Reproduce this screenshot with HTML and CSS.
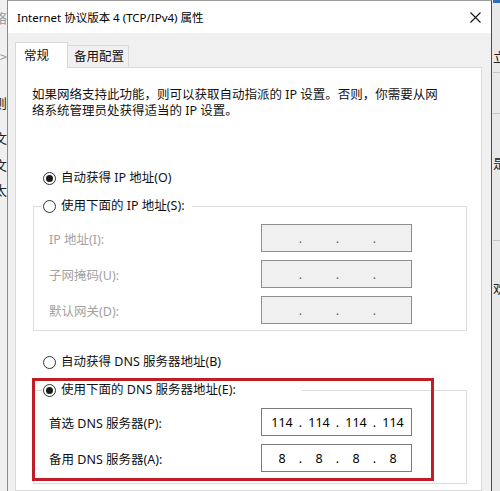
FILE: index.html
```html
<!DOCTYPE html>
<html lang="zh-CN">
<head>
    <meta charset="UTF-8">
    <meta name="viewport" content="width=device-width, initial-scale=1.0">
    <link rel="stylesheet" href="styles.css">
    <title>Internet 协议版本 4 (TCP/IPv4) 属性</title>
</head>
<body>
<div class="screen">
    <div class="side side-left">
        <span class="frag muted">络</span>
        <span class="frag muted">&gt;</span>
        <span class="frag">则</span>
        <span class="frag">文</span>
        <span class="frag">文</span>
        <span class="frag">太</span>
    </div>

    <div class="dialog">
        <div class="titlebar">
            <span class="title">Internet 协议版本 4 (TCP/IPv4) 属性</span>
            <span class="close">
                <svg width="11" height="11" viewBox="0 0 11 11">
                    <path d="M0.5 0.5 L10.5 10.5 M10.5 0.5 L0.5 10.5" stroke="#111" stroke-width="1.1" fill="none"/>
                </svg>
            </span>
        </div>

        <div class="dialog-body">
            <div class="tabs">
                <div class="tab active">常规</div>
                <div class="tab">备用配置</div>
            </div>

            <div class="panel">
                <p class="intro">如果网络支持此功能，则可以获取自动指派的 IP 设置。否则，你需要从网<br>络系统管理员处获得适当的 IP 设置。</p>

                <div class="option first"><span class="radio checked"></span>自动获得 IP 地址(O)</div>

                <fieldset class="group ip-group">
                    <legend class="option"><span class="radio"></span>使用下面的 IP 地址(S):</legend>
                    <div class="fields">
                        <span class="label disabled">IP 地址(I):</span>
                        <div class="ip-field disabled"><span class="seg"></span><span class="dot">.</span><span class="seg"></span><span class="dot">.</span><span class="seg"></span><span class="dot">.</span><span class="seg"></span></div>
                        <span class="label disabled">子网掩码(U):</span>
                        <div class="ip-field disabled"><span class="seg"></span><span class="dot">.</span><span class="seg"></span><span class="dot">.</span><span class="seg"></span><span class="dot">.</span><span class="seg"></span></div>
                        <span class="label disabled">默认网关(D):</span>
                        <div class="ip-field disabled"><span class="seg"></span><span class="dot">.</span><span class="seg"></span><span class="dot">.</span><span class="seg"></span><span class="dot">.</span><span class="seg"></span></div>
                    </div>
                </fieldset>

                <div class="option dns-auto"><span class="radio"></span>自动获得 DNS 服务器地址(B)</div>

                <fieldset class="group dns-group">
                    <legend class="option"><span class="radio checked"></span>使用下面的 DNS 服务器地址(E):</legend>
                    <div class="fields">
                        <span class="label">首选 DNS 服务器(P):</span>
                        <div class="ip-field"><span class="seg">114</span><span class="dot">.</span><span class="seg">114</span><span class="dot">.</span><span class="seg">114</span><span class="dot">.</span><span class="seg">114</span></div>
                        <span class="label">备用 DNS 服务器(A):</span>
                        <div class="ip-field"><span class="seg">8</span><span class="dot">.</span><span class="seg">8</span><span class="dot">.</span><span class="seg">8</span><span class="dot">.</span><span class="seg">8</span></div>
                    </div>
                </fieldset>

                <!-- annotation drawn over the screenshot -->
                <div class="highlight"></div>
            </div>
        </div>
    </div>

    <div class="side side-right">
        <span class="edge-blue"></span>
        <span class="frag frag-1">立</span>
        <span class="rule rule-1"></span>
        <span class="rule rule-2"></span>
        <span class="frag frag-2">是:</span>
        <span class="rule rule-3"></span>
        <span class="frag frag-3">欢</span>
    </div>
</div>
</body>
</html>
```

FILE: styles.css
```css
body {
    margin: 0;
    font-family: "Noto Sans", "Noto Sans CJK SC", sans-serif;
    font-size: 12.5px;
    color: #111;
    background-color: #f0f0f0;
}

.screen {
    display: flex;
    width: 500px;
    height: 491px;
    overflow: hidden;
}

/* bits of the windows behind the dialog */
.side {
    width: 7px;
    flex-shrink: 0;
    display: flex;
    flex-direction: column;
    overflow: hidden;
    line-height: 16px;
    white-space: nowrap;
}

.side-left {
    align-items: flex-end;
    background-color: #f0f0f0;
}

.side-left .frag:nth-child(1) { margin-top: 10px; }
.side-left .frag:nth-child(2) { margin-top: 23px; }
.side-left .frag:nth-child(3) { margin-top: 30px; }
.side-left .frag:nth-child(4) { margin-top: 19px; }
.side-left .frag:nth-child(5) { margin-top: 11px; }
.side-left .frag:nth-child(6) { margin-top: 9px; }

.side-right {
    align-items: flex-start;
    background-color: #e9e9e9;
    padding-left: 1px;
}

.frag {
    font-family: "Noto Sans CJK SC", sans-serif;
    font-size: 13px;
    color: #222;
}

.frag.muted {
    color: #9a9a9a;
}

.edge-blue {
    display: block;
    width: 100%;
    height: 3px;
    background-color: #2c6fb8;
}

.rule {
    display: block;
    width: 100%;
    height: 1px;
    background-color: #c6c6c6;
}

.frag-1 { margin-top: 46px; }
.rule-1 { margin-top: 7px; }
.rule-2 { margin-top: 40px; }
.frag-2 { margin-top: 41px; }
.rule-3 { margin-top: 69px; }
.frag-3 { margin-top: 39px; }

/* dialog */
.dialog {
    flex: 1;
    display: flex;
    flex-direction: column;
    border-top: 1px solid #9c9c9c;
    border-left: 1px solid #8a8a8a;
    border-right: 1px solid #4a4a4a;
}

.titlebar {
    height: 32px;
    flex-shrink: 0;
    display: flex;
    align-items: center;
    justify-content: space-between;
    background-color: #fff;
}

.title {
    padding-left: 9px;
    padding-bottom: 1px;
    font-size: 11.5px;
    color: #000;
}

.close {
    width: 32px;
    display: flex;
    justify-content: center;
}

.dialog-body {
    flex: 1;
    display: flex;
    flex-direction: column;
    padding: 9px 9px 0 7px;
    background-color: #f0f0f0;
}

.tabs {
    display: flex;
    align-items: flex-start;
}

.tab {
    height: 21px;
    line-height: 21px;
    margin-top: 3px;
    padding: 0 4px 0 6px;
    border: 1px solid #d9d9d9;
    border-left: none;
    border-bottom: none;
    background-color: #f0f0f0;
}

.tab.active {
    position: relative;
    z-index: 1;
    height: 25px;
    line-height: 25px;
    margin-top: 0;
    margin-bottom: -1px;
    padding: 0 18px 0 8px;
    border-left: 1px solid #d9d9d9;
    background-color: #fff;
}

.panel {
    position: relative;
    flex: 1;
    background-color: #fff;
    border: 1px solid #d9d9d9;
}

.intro {
    margin: 19px 0 0 16px;
    line-height: 16px;
}

.option {
    display: flex;
    align-items: center;
    height: 16px;
    line-height: 16px;
    white-space: nowrap;
}

.option.first {
    margin: 51px 0 0 27px;
}

.option.dns-auto {
    margin: 23px 0 0 27px;
}

.radio {
    width: 11px;
    height: 11px;
    margin-right: 5px;
    border: 1px solid #333;
    border-radius: 50%;
    background-color: #fff;
    display: inline-flex;
    align-items: center;
    justify-content: center;
    flex-shrink: 0;
}

.radio.checked::after {
    content: "";
    width: 7px;
    height: 7px;
    border-radius: 50%;
    background-color: #1a1a1a;
}

.group {
    margin: 12px 14px 0 17px;
    padding: 10px 0 6px 0;
    border: 1px solid #dcdcdc;
    min-width: 0;
}

.group legend {
    margin-left: 8px;
    padding: 0 0 0 1px;
    box-sizing: border-box;
}

.ip-group legend {
    width: 150px;
}

.dns-group {
    padding-bottom: 11px;
}

.dns-group legend {
    width: 260px;
}

.fields {
    display: grid;
    grid-template-columns: 1fr 151px;
    row-gap: 8px;
    align-items: center;
    padding: 0 54px 0 15px;
}

.label.disabled {
    color: #a2a2a2;
}

.ip-field {
    height: 26px;
    display: flex;
    align-items: center;
    padding-left: 5px;
    border: 1px solid #7a7a7a;
    background-color: #fff;
    color: #000;
}

.ip-field.disabled {
    border-color: #8e8e8e;
    background-color: #f0f0f0;
    color: #666;
}

.seg {
    width: 30px;
    text-align: center;
}

.dot {
    width: 7px;
    text-align: center;
}

.highlight {
    position: absolute;
    left: 16px;
    top: 310px;
    width: 396px;
    height: 97px;
    border: 3px solid #c21d26;
    pointer-events: none;
}
```
